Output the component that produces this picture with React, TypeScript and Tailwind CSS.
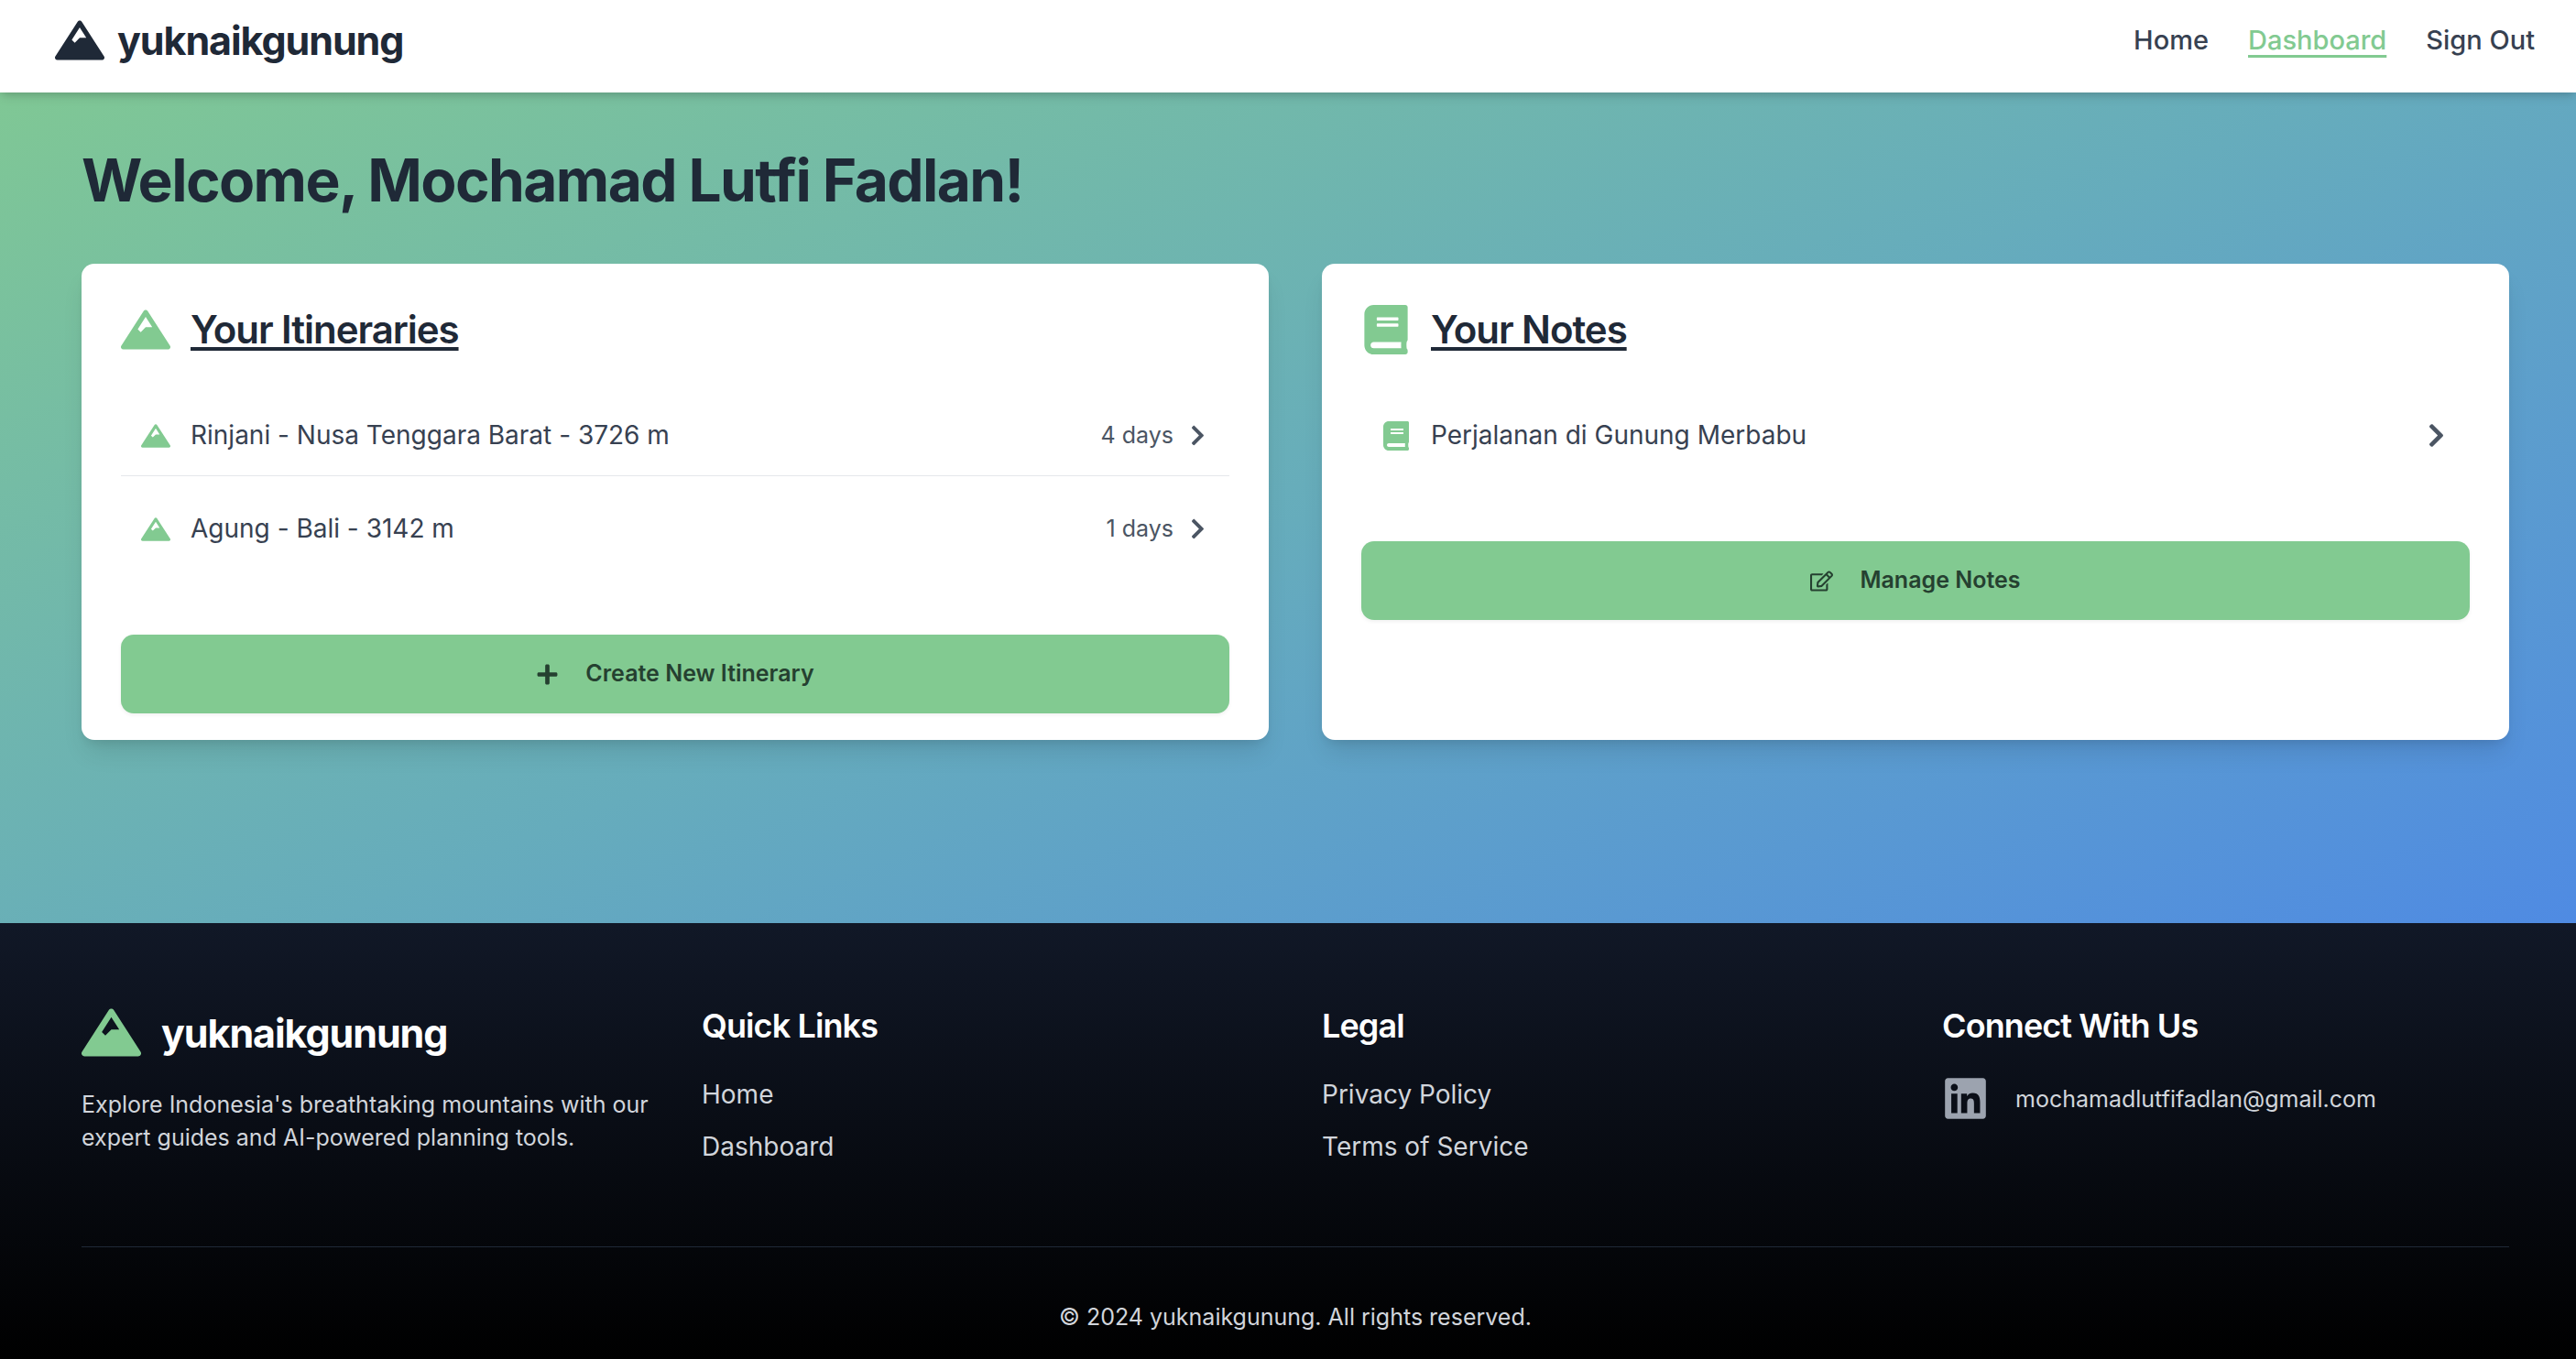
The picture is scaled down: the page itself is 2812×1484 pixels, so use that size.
import type { ReactNode } from 'react';
import { FaBook, FaChevronRight, FaLinkedin, FaMountain, FaPlus, FaRegEdit } from 'react-icons/fa';

const itineraries = [
  { name: 'Rinjani - Nusa Tenggara Barat - 3726 m', days: 4 },
  { name: 'Agung - Bali - 3142 m', days: 1 },
];

const notes = ['Perjalanan di Gunung Merbabu'];

function Header() {
  return (
    <header className="relative z-10 flex h-[101px] items-center justify-between bg-white pr-[45px] pb-[14px] pl-[60px] shadow-[0_7px_11px_-2px_rgba(0,0,0,0.1),0_4px_7px_-2px_rgba(0,0,0,0.1)]">
      <a href="#home" className="flex items-center gap-[14px] text-[#1f2937]">
        <FaMountain className="size-[54px]" />
        <span className="text-[43px] leading-[58px] font-bold tracking-tight">yuknaikgunung</span>
      </a>
      <nav className="flex items-center gap-[43px] text-[29px] leading-[43px] font-medium text-[#374151]">
        <a href="#home">Home</a>
        <a href="#dashboard" aria-current="page" className="text-[#82ca91] underline decoration-[3px] underline-offset-[6px]">
          Dashboard
        </a>
        <button type="button">Sign Out</button>
      </nav>
    </header>
  );
}

function Card({ icon, title, children }: { icon: ReactNode; title: string; children: ReactNode }) {
  return (
    <section className="rounded-[14px] bg-white px-[43px] pt-[43px] pb-[29px] shadow-[0_18px_27px_-5px_rgba(0,0,0,0.1),0_7px_11px_-5px_rgba(0,0,0,0.1)]">
      <h2 className="mb-[43px] flex items-center gap-[22px] text-[42px] leading-[58px] font-semibold tracking-tight text-[#1f2937]">
        <span className="text-[54px] text-[#82ca91]">{icon}</span>
        <a href={'#' + title.toLowerCase().replace(' ', '-')} className="underline decoration-[4px] underline-offset-[4px]">
          {title}
        </a>
      </h2>
      {children}
    </section>
  );
}

function ActionButton({ icon, children }: { icon: ReactNode; children: ReactNode }) {
  return (
    <button
      type="button"
      className="mt-[72px] flex h-[86px] w-full items-center justify-center gap-[29px] rounded-[14px] bg-[#82ca91] text-[25px] font-semibold text-[#254030] shadow-[0_2px_4px_rgba(0,0,0,0.06)]"
    >
      {icon}
      {children}
    </button>
  );
}

function FooterColumn({ title, children }: { title: string; children: ReactNode }) {
  return (
    <div>
      <h3 className="mb-[29px] text-[36px] leading-[50px] font-semibold tracking-tight text-white">{title}</h3>
      {children}
    </div>
  );
}

function FooterLinks({ links }: { links: string[] }) {
  return (
    <ul className="flex flex-col gap-[14px] text-[28px] leading-[43px]">
      {links.map((link) => (
        <li key={link}>
          <a href={'#' + link.toLowerCase().replaceAll(' ', '-')}>{link}</a>
        </li>
      ))}
    </ul>
  );
}

export default function App() {
  return (
    <div className="flex min-h-screen flex-col font-['Inter',sans-serif] [font-variant-ligatures:none]">
      <Header />
      <main className="-mt-[101px] flex-1 bg-linear-to-br/srgb from-[#82ca91] via-[#66acbc] to-[#4c86e8] bg-[length:100%_114%] bg-no-repeat pt-[159px] pr-[73px] pb-[86px] pl-[89px]">
        <h1 className="mb-[55px] pt-[2px] text-[64px] leading-[72px] font-bold tracking-tight text-[#1f2937]">
          Welcome, Mochamad Lutfi Fadlan!
        </h1>
        <div className="grid grid-cols-2 gap-[58px]">
          <Card icon={<FaMountain />} title="Your Itineraries">
            <ul className="flex flex-col gap-[14px]">
              {itineraries.map(({ name, days }) => (
                <li key={name} className="border-b border-gray-200 last:border-b-0">
                  <a href="#itinerary" className="flex items-center px-[22px] py-[22px] text-[28px] leading-[43px] text-[#374151]">
                    <FaMountain className="mr-[22px] size-[32px] text-[#82ca91]" />
                    <span className="flex-1">{name}</span>
                    <span className="mr-[14px] text-[25px] text-[#4b5563]">{days} days</span>
                    <FaChevronRight className="size-[25px] text-[#4b5563]" />
                  </a>
                </li>
              ))}
            </ul>
            <ActionButton icon={<FaPlus />}>Create New Itinerary</ActionButton>
          </Card>
          <Card icon={<FaBook />} title="Your Notes">
            <ul className="flex flex-col gap-[14px]">
              {notes.map((note) => (
                <li key={note} className="border-b border-gray-200 last:border-b-0">
                  <a href="#note" className="flex items-center px-[22px] py-[22px] text-[28px] leading-[43px] text-[#374151]">
                    <FaBook className="mr-[22px] size-[32px] text-[#82ca91]" />
                    <span className="flex-1">{note}</span>
                    <FaChevronRight className="size-[29px] text-[#4b5563]" />
                  </a>
                </li>
              ))}
            </ul>
            <ActionButton icon={<FaRegEdit />}>Manage Notes</ActionButton>
          </Card>
        </div>
      </main>
      <footer className="bg-linear-to-b/srgb from-[#111827] to-black pt-[87px] pr-[73px] pb-[28px] pl-[89px] text-[#d1d5db]">
        <div className="grid grid-cols-4 gap-[58px] pb-[87px]">
          <div>
            <a href="#home" className="mb-[28px] flex items-center gap-[22px] text-white">
              <FaMountain className="size-[65px] text-[#82ca91]" />
              <span className="text-[43px] leading-[58px] font-bold tracking-tight">yuknaikgunung</span>
            </a>
            <p className="text-[25px] leading-[36px]">
              Explore Indonesia's breathtaking mountains with our expert guides and AI-powered planning tools.
            </p>
          </div>
          <FooterColumn title="Quick Links">
            <FooterLinks links={['Home', 'Dashboard']} />
          </FooterColumn>
          <FooterColumn title="Legal">
            <FooterLinks links={['Privacy Policy', 'Terms of Service']} />
          </FooterColumn>
          <FooterColumn title="Connect With Us">
            <div className="flex items-center gap-[29px] text-[25px] leading-[36px]">
              <a href="#linkedin" aria-label="LinkedIn" className="text-[#9ca3af]">
                <FaLinkedin className="size-[51px]" />
              </a>
              <a href="mailto:mochamadlutfifadlan@gmail.com">mochamadlutfifadlan@gmail.com</a>
            </div>
          </FooterColumn>
        </div>
        <p className="border-t border-[#1f2937] pt-[58px] text-center text-[25px] leading-[36px]">
          © 2024 yuknaikgunung. All rights reserved.
        </p>
      </footer>
    </div>
  );
}
